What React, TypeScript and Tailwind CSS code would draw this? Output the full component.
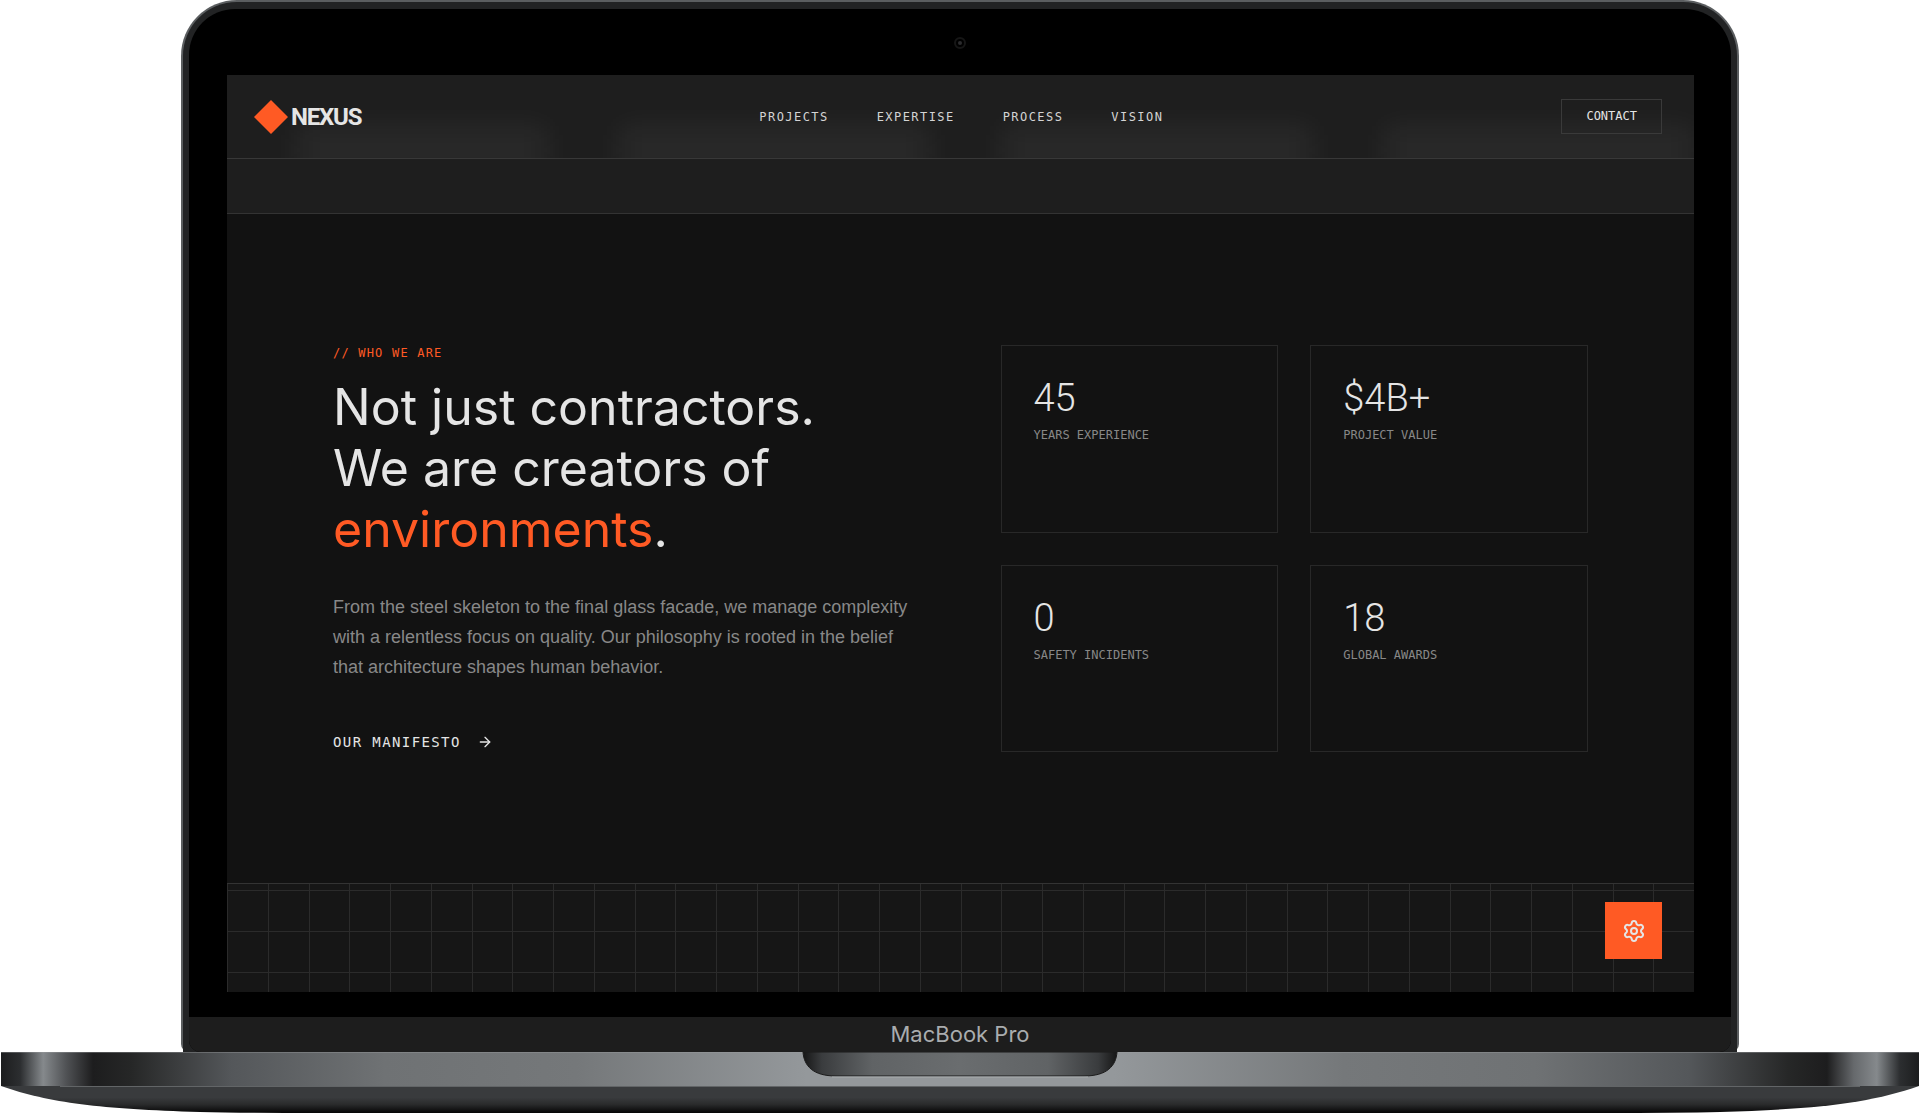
import { ArrowRight, Settings } from "lucide-react";

const navItems = ["Projects", "Expertise", "Process", "Vision"];

const stats = [
  { value: "45", label: "Years Experience" },
  { value: "$4B+", label: "Project Value" },
  { value: "0", label: "Safety Incidents" },
  { value: "18", label: "Global Awards" },
];

const mono = "font-['DejaVu_Sans_Mono',monospace] uppercase";

function Header() {
  return (
    <header className="relative flex items-center justify-between overflow-hidden border-b border-[#383838] bg-[#1e1e1e] px-8 py-6">
      <div aria-hidden="true" className="absolute inset-x-0 -bottom-4 flex justify-between pl-[70px] blur-[14px]">
        <span className="h-12 w-[250px] bg-white/5" />
        <span className="h-12 w-[310px] bg-white/5" />
        <span className="h-12 w-[310px] bg-white/5" />
        <span className="h-12 w-[310px] bg-white/5" />
      </div>
      <a href="#top" className="relative flex items-center gap-2 text-[#e5e5e5]">
        <span className="size-6 rotate-45 bg-[#ff5a24]" />
        <span className="font-['Roboto',sans-serif] text-2xl leading-8 font-bold tracking-tighter">NEXUS</span>
      </a>
      <nav className="relative flex gap-12">
        {navItems.map((item) => (
          <a key={item} href={`#${item.toLowerCase()}`} className={`${mono} text-xs tracking-[0.12em] text-[#d4d4d4]`}>
            {item}
          </a>
        ))}
      </nav>
      <button type="button" className={`${mono} relative border border-[#3a3a3a] px-6 py-2 text-xs leading-[17px] text-[#e5e5e5]`}>
        Contact
      </button>
    </header>
  );
}

function About() {
  return (
    <section className="grid grid-cols-2 gap-20 bg-[#121212] px-[106px] py-[131px]">
      <div>
        <p className={`${mono} text-xs tracking-widest text-[#ff5a24]`}>// Who we are</p>
        <h1 className="mt-4 font-['Inter',sans-serif] text-[50px] leading-[61px] font-normal whitespace-nowrap text-[#e5e5e5]">
          Not just contractors.
          <br />
          We are creators of
          <br />
          <span className="text-[#ff5a24]">environments</span>.
        </h1>
        <p className="mt-8 font-['Liberation_Sans',sans-serif] text-lg leading-[30px] text-[#888888]">
          From the steel skeleton to the final glass facade, we manage complexity with a relentless focus on quality.
          Our philosophy is rooted in the belief that architecture shapes human behavior.
        </p>
        <a href="#manifesto" className={`${mono} mt-[50px] flex items-center gap-4 text-sm leading-5 tracking-widest text-[#e5e5e5]`}>
          Our Manifesto
          <ArrowRight className="size-4" />
        </a>
      </div>
      <dl className="grid grid-cols-2 gap-8">
        {stats.map((s) => (
          <div key={s.label} className="flex flex-col border border-[#282828] p-8">
            <dd className="font-['Roboto',sans-serif] text-[38px] leading-10 font-light text-[#e5e5e5]">{s.value}</dd>
            <dt className={`${mono} order-last mt-2 text-xs leading-[18px] text-[#888888]`}>{s.label}</dt>
          </div>
        ))}
      </dl>
    </section>
  );
}

function Blueprint() {
  return (
    <section className="relative h-[109px] overflow-hidden border-t border-[#333333] bg-[#161616]">
      <div aria-hidden="true" className="absolute inset-x-0 top-0 grid grid-cols-36 grid-rows-[7px_41px_41px_41px]">
        {Array.from({ length: 144 }, (_, i) => (
          <span key={i} className="border-b border-l border-[#2b2b2b]" />
        ))}
      </div>
      <button
        type="button"
        aria-label="Settings"
        className="absolute top-[18px] right-8 grid size-[57px] place-items-center bg-[#ff5a24] text-[#e5e5e5]"
      >
        <Settings className="size-6" />
      </button>
    </section>
  );
}

function Base() {
  return (
    <svg aria-hidden="true" viewBox="0 0 1920 62" preserveAspectRatio="none" className="block h-[62px] w-full">
      <defs>
        <linearGradient id="rim">
          <stop offset="0" stopColor="#1c1d1e" />
          <stop offset="0.01" stopColor="#2c2e30" />
          <stop offset="0.022" stopColor="#85898c" />
          <stop offset="0.034" stopColor="#505255" />
          <stop offset="0.048" stopColor="#1d1d1e" />
          <stop offset="0.068" stopColor="#262727" />
          <stop offset="0.12" stopColor="#54575a" />
          <stop offset="0.2" stopColor="#6f7274" />
          <stop offset="0.3" stopColor="#75787a" />
          <stop offset="0.42" stopColor="#94989b" />
          <stop offset="0.58" stopColor="#94989b" />
          <stop offset="0.7" stopColor="#75787a" />
          <stop offset="0.8" stopColor="#6f7274" />
          <stop offset="0.88" stopColor="#54575a" />
          <stop offset="0.932" stopColor="#262727" />
          <stop offset="0.952" stopColor="#1d1d1e" />
          <stop offset="0.966" stopColor="#66696c" />
          <stop offset="0.978" stopColor="#85898c" />
          <stop offset="0.99" stopColor="#2c2e30" />
          <stop offset="1" stopColor="#1c1d1e" />
        </linearGradient>
        <linearGradient id="under" x1="0" y1="0" x2="0" y2="1">
          <stop offset="0.5" stopColor="#393b3d" />
          <stop offset="0.72" stopColor="#2a2b2c" />
          <stop offset="1" stopColor="#050505" />
        </linearGradient>
        <linearGradient id="notch">
          <stop offset="0" stopColor="#161616" />
          <stop offset="0.06" stopColor="#3a3c3e" />
          <stop offset="0.22" stopColor="#606365" />
          <stop offset="0.5" stopColor="#6a6d6f" />
          <stop offset="0.78" stopColor="#606365" />
          <stop offset="0.94" stopColor="#3a3c3e" />
          <stop offset="1" stopColor="#161616" />
        </linearGradient>
      </defs>
      <path d="M1 30 H1919 V34 C1870 51 1820 57 1720 60 Q1680 61 1600 61 H320 Q240 61 200 60 C100 57 50 51 1 34Z" fill="url(#under)" />
      <path d="M1 0 H1919 V34 H1Z" fill="url(#rim)" />
      <path d="M60 34.5 H1860" stroke="#8b8f91" strokeOpacity="0.5" />
      <path d="M1 0.5 H1919" stroke="#9a9d9f" strokeOpacity="0.4" />
      <path d="M803 0 H1117 C1116 14 1107 24 1084 24 H836 C813 24 804 14 803 0Z" fill="url(#notch)" stroke="#1b1b1b" />
      <path d="M832 25 H1088" stroke="#a9adaf" />
    </svg>
  );
}

export default function App() {
  return (
    <main id="top" className="bg-white">
      <div className="mx-[181px] rounded-t-[56px] rounded-b-lg bg-[#5b5e60] px-[2px] pt-[2px]">
        <div className="rounded-t-[54px] bg-[#222324] px-[6px] pt-[7px]">
          <div className="overflow-hidden rounded-t-[46px] rounded-b-xl bg-black">
            <div className="relative pt-[66px] pr-[37px] pb-[25px] pl-[38px]">
              <span aria-hidden="true" className="absolute top-7 left-1/2 grid size-3 -translate-x-1/2 place-items-center rounded-full border-2 border-[#161616] bg-black">
                <span className="size-1 rounded-full bg-[#2b2b2d]" />
              </span>
              <Header />
              <div className="h-[55px] border-b border-[#333333] bg-[#1e1e1e]" />
              <About />
              <Blueprint />
            </div>
            <p className="bg-[#1d1d1d] text-center font-['Inter',sans-serif] text-[22px] leading-[35px] text-[#a9acae]">MacBook Pro</p>
          </div>
        </div>
      </div>
      <Base />
    </main>
  );
}
